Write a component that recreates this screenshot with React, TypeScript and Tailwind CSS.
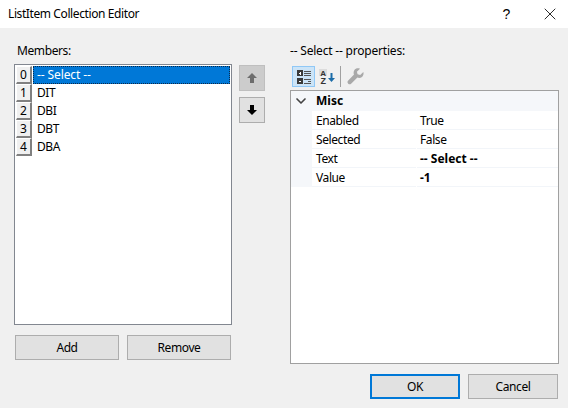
import { ChevronDown, X } from "lucide-react";

const members = ["-- Select --", "DIT", "DBI", "DBT", "DBA"];

const props = [
  { name: "Enabled", value: "True", bold: false },
  { name: "Selected", value: "False", bold: false },
  { name: "Text", value: "-- Select --", bold: true },
  { name: "Value", value: "-1", bold: true },
];

function MemberRow({ index, label }: { index: number; label: string }) {
  const selected = index === 0;
  return (
    <div className="flex h-[18px]">
      <div className="flex h-[18px] w-[16px] items-center justify-center border-t border-l border-t-white border-l-white border-r-2 border-b-2 border-r-[#808080] border-b-[#808080] bg-[#f0f0f0] text-[12px] tracking-normal leading-none">
        {index}
      </div>
      {selected ? (
        <div className="ml-px flex h-[18px] flex-1 items-center border border-dotted border-[#0b2a4a] bg-[#0078d7] pl-[3px] tracking-[-0.1px] text-white">
          {label}
        </div>
      ) : (
        <div className="ml-px flex h-[18px] flex-1 items-center pl-[4px]">{label}</div>
      )}
    </div>
  );
}

function WinButton({ label, className }: { label: string; className: string }) {
  return (
    <button className={"flex h-[25px] items-center justify-center bg-[#e1e1e1] " + className}>
      {label}
    </button>
  );
}

function CategorizedIcon() {
  return (
    <svg width="16" height="16" viewBox="0 0 16 16" shapeRendering="crispEdges">
      <path d="M1 1h6v6H1z M1 9h6v6H1z" fill="#3a3a3a" />
      <path d="M3 4h2v1H3z M3 12h2v1H3z M3.5 3h1v3h-1z" fill="#fff" />
      <path d="M8 2h7v1H8z M8 4h7v1H8z M8 6h7v1H8z M8 10h7v1H8z M8 14h7v1H8z M12 12h3v1h-3z" fill="#555" />
    </svg>
  );
}

function SortIcon() {
  return (
    <svg width="18" height="17" viewBox="0 0 18 17">
      <path d="M1 1h8v7H1z" fill="#dcdcdc" />
      <text x="5" y="7.5" textAnchor="middle" fontSize="8" fontWeight="700" fontFamily="Liberation Sans, sans-serif" fill="#333">A</text>
      <text x="5" y="16" textAnchor="middle" fontSize="9" fontWeight="700" fontFamily="Liberation Sans, sans-serif" fill="#333">Z</text>
      <path d="M13.5 5v6" stroke="#1b6ca8" strokeWidth="2" fill="none" />
      <path d="M10 10h7l-3.5 4z" fill="#1b6ca8" />
    </svg>
  );
}

function WrenchIcon() {
  return (
    <svg width="17" height="17" viewBox="0 0 17 17">
      <path
        d="M16.3 4 13.2 7 10.6 6.3 9.9 3.7 13 .7C10.8-.1 8.4.5 7.3 2.2 6.4 3.5 6.4 5.3 7 6.6L1 12.7C.2 13.6.3 14.9 1.2 15.7 2.1 16.5 3.3 16.5 4.1 15.7L10.4 9.6C12 10.3 13.7 10 15 9 16.4 7.7 16.9 5.9 16.3 4Z"
        fill="#a9a9a9"
      />
    </svg>
  );
}

export default function App() {
  return (
    <div className="flex h-[408px] w-[568px] flex-col bg-[#f0f0f0] font-['Noto_Sans',sans-serif] text-[12px] leading-none tracking-[-0.4px] text-black">
      <div className="flex h-[28px] items-center bg-white pl-[8px]">
        <span className="flex-1 text-[12px]">ListItem Collection Editor</span>
        <span className="mr-[30px] font-['Liberation_Sans',sans-serif] text-[14px]">?</span>
        <X size={20} strokeWidth={1} className="mr-[8px]" />
      </div>

      <div className="flex flex-1 pt-[36px] pl-[14px]">
        <div className="flex w-[218px] flex-col">
          <div className="mt-[-19px] mb-[7px] h-[12px] pl-[3px]">Members:</div>
          <div className="h-[261px] border border-[#828790] bg-white pl-[1px] pt-[1px] pr-[1px]">
            {members.map((label, i) => (
              <MemberRow key={label} index={i} label={label} />
            ))}
          </div>
          <div className="mt-[10px] flex gap-[8px] px-[1px]">
            <WinButton label="Add" className="w-[104px] border border-[#adadad]" />
            <WinButton label="Remove" className="w-[104px] border border-[#adadad]" />
          </div>
        </div>

        <div className="ml-[7px] flex w-[26px] flex-col gap-[6px] pt-[1px]">
          <div className="flex h-[26px] items-center justify-center border border-[#bfbfbf] bg-[#cccccc]">
            <svg width="10" height="10" viewBox="0 0 10 10">
              <path d="M5 0 10 5H7V10H3V5H0Z" fill="#6d6d6d" />
            </svg>
          </div>
          <div className="flex h-[26px] items-center justify-center border border-[#adadad] bg-[#e1e1e1]">
            <svg width="10" height="10" viewBox="0 0 10 10">
              <path d="M5 10 10 5H7V0H3V5H0Z" fill="#000" />
            </svg>
          </div>
        </div>

        <div className="ml-[25px] flex w-[269px] flex-col">
          <div className="mt-[-19px] mb-[8px] h-[12px] tracking-[-0.2px]">-- Select -- properties:</div>
          <div className="flex h-[23px] items-center pl-[2px]">
            <div className="flex h-[21px] w-[23px] items-center justify-center border border-[#90c8f6] bg-[#cce4f7]">
              <CategorizedIcon />
            </div>
            <div className="ml-[3px] flex w-[18px] justify-center">
              <SortIcon />
            </div>
            <div className="ml-[4px] h-[21px] w-px bg-[#a0a0a0]" />
            <div className="ml-[6px]">
              <WrenchIcon />
            </div>
          </div>
          <div className="mt-[2px] h-[274px] border border-[#a0a0a0] bg-white">
            <div className="flex h-[20px] items-center bg-[#f5f7fa]">
              <div className="flex w-[19px] justify-center">
                <ChevronDown size={16} strokeWidth={2.5} color="#444" />
              </div>
              <span className="ml-[6px] font-bold tracking-normal">Misc</span>
            </div>
            {props.map((p) => (
              <div key={p.name} className="flex h-[19px]">
                <div className="w-[21px] bg-[#f5f7fa]" />
                <div className="flex w-[104px] items-center border-b border-b-[#f2f5f9] pl-[4px] pt-px">{p.name}</div>
                <div className={"ml-px flex flex-1 items-center border-b border-b-[#f2f5f9] pl-[3px] pt-px " + (p.bold ? "font-bold tracking-normal" : "")}>
                  {p.value}
                </div>
              </div>
            ))}
          </div>
        </div>
      </div>

      <div className="flex justify-end gap-[8px] pr-[10px] pb-[9px]">
        <WinButton label="OK" className="w-[90px] border-2 border-[#0078d7]" />
        <WinButton label="Cancel" className="w-[90px] border border-[#adadad]" />
      </div>
    </div>
  );
}
